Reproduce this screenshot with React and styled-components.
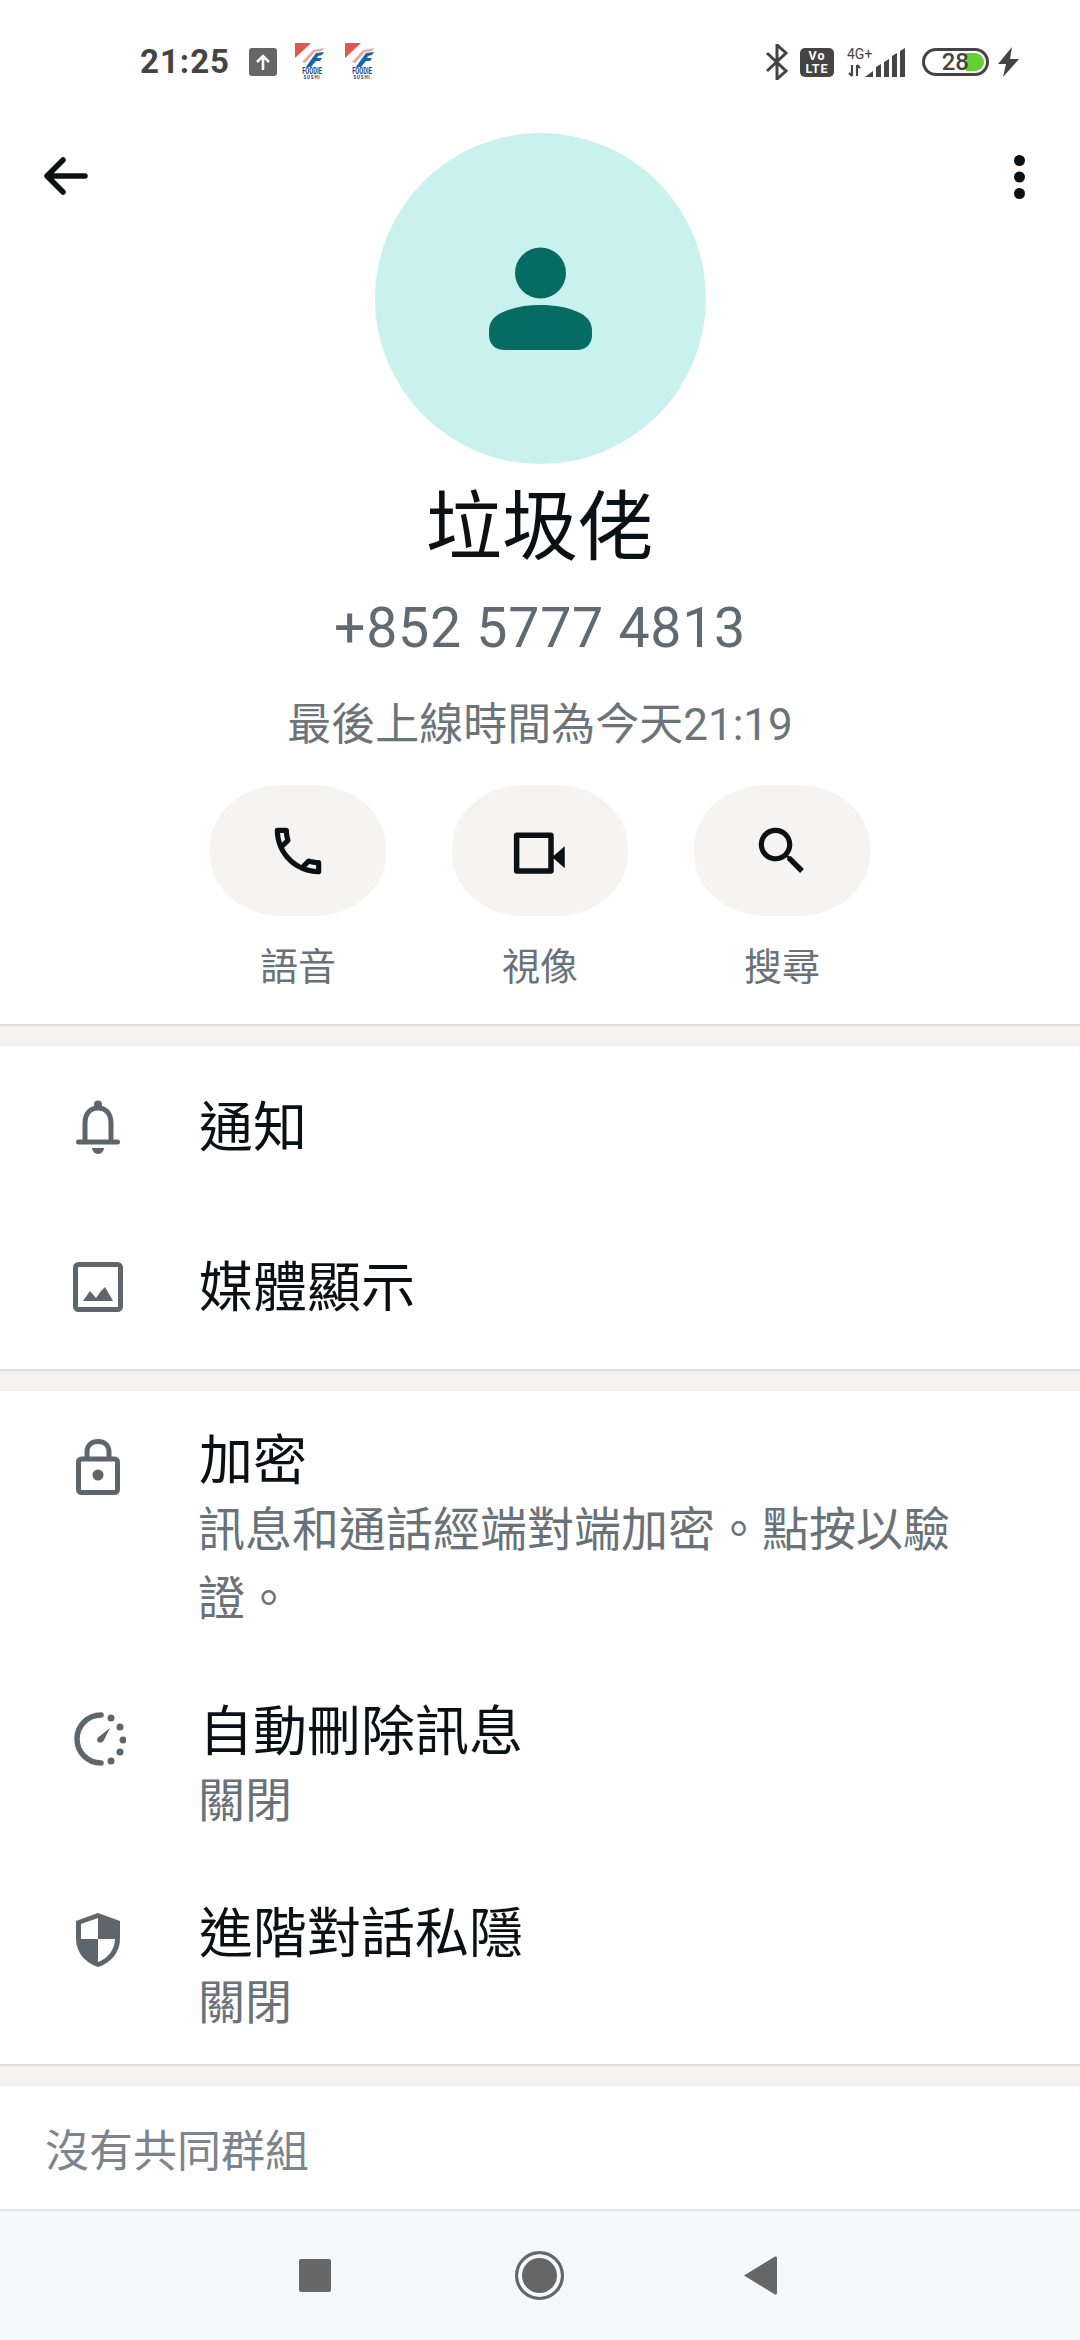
import React from 'react';
import styled, { createGlobalStyle } from 'styled-components';

const Global = createGlobalStyle`
  html, body { margin: 0; padding: 0; background: #fff; }
  * { box-sizing: border-box; }
  body { font-family: Roboto, "Noto Sans CJK TC", sans-serif; }
`;
const Page = styled.div`
  width: 1080px; height: 2340px; display: flex; flex-direction: column; background: #fff; overflow: hidden;
`;
const StatusBar = styled.div`
  height: 122px; flex: none; display: flex; justify-content: space-between; align-items: flex-start;
  padding: 42px 61px 0 140px; color: #444;
`;
const StatusGroup = styled.div`display: flex; align-items: center; height: 40px;`;
const Spacer = styled.span`flex: none; width: ${p => p.$w}px;`;
const Time = styled.span`font: 700 33px/40px Roboto, sans-serif; letter-spacing: 1px; color: #444; width: 109px;`;
const UploadBadge = styled.div`
  width: 28px; height: 28px; border-radius: 3px; background: #666; display: flex; align-items: center; justify-content: center;
`;
const VoLte = styled.div`
  width: 34px; height: 29px; border-radius: 5px; background: #444; color: #fff; display: flex; flex-direction: column;
  align-items: center; justify-content: center; font: 700 12.5px/13px Roboto, sans-serif; letter-spacing: 1px;
`;
const Battery = styled.div`
  position: relative; width: 67px; height: 28px; border: 3px solid #444; border-radius: 14px; overflow: hidden;
  display: flex; align-items: center; justify-content: flex-end; padding-right: 17px;
  font: 500 24px/22px Roboto, sans-serif; color: #444;
`;
const BatteryFill = styled.span`
  position: absolute; right: 2px; top: 2px; bottom: 2px; width: 18px; background: #63cf33; border-radius: 0 10px 10px 0;
`;
const BatteryText = styled.span`position: relative;`;

const Hero = styled.header`
  flex: none; display: flex; flex-direction: column; align-items: center; padding: 11px 0 35px;
`;
const TopRow = styled.div`
  width: 100%; display: grid; grid-template-columns: 1fr 331px 1fr; align-items: start;
`;
const Back = styled.div`padding: 21px 0 0 42px;`;
const More = styled.div`display: flex; justify-content: flex-end; padding: 22px 55px 0 0;`;
const Avatar = styled.div`
  width: 331px; height: 331px; border-radius: 50%; background: #c9f1ee; display: flex; align-items: center; justify-content: center;
`;
const Name = styled.h1`
  margin: 7px 0 0; font: 400 76px/100px "Noto Sans CJK TC", sans-serif; color: #0b1014;
`;
const Phone = styled.div`
  margin-top: 28px; font: 400 55.5px/60px Roboto, sans-serif; color: #5f6a72; letter-spacing: .7px;
`;
const Seen = styled.div`
  margin-top: 38px; font: 400 44px/56px Roboto, "Noto Sans CJK TC", sans-serif; color: #6b7479;
`;
const Actions = styled.div`display: flex; gap: 66px; margin-top: 32px;`;
const Action = styled.div`display: flex; flex-direction: column; align-items: center; gap: 23px;`;
const Pill = styled.div`
  width: 176px; height: 131px; border-radius: 72px / 62px; background: #f5f4f2; display: flex; align-items: center; justify-content: center;
`;
const ActionLabel = styled.div`font: 400 38px/50px "Noto Sans CJK TC", sans-serif; color: #697278;`;

const Gap = styled.div`
  flex: none; height: 22px; background: #f4f3f1; box-shadow: inset 0 3px 2px -1px #dcdcdc;
`;
const Section = styled.section`
  flex: none; display: flex; flex-direction: column; gap: ${p => p.$gap || 0}px; padding: ${p => p.$pad || '0'};
`;
const SimpleRow = styled.div`height: 160px; display: flex; align-items: center;`;
const InfoRow = styled.div`display: flex; align-items: flex-start; padding: 32px 90px 31px 0;`;
const IconCol = styled.div`
  flex: none; width: 198px; display: flex; justify-content: center; padding-right: 3px;
  margin-top: ${p => p.$top || 0}px;
`;
const RowBody = styled.div`flex: 1; min-width: 0;`;
const SimpleBody = styled(RowBody)`padding-bottom: 6px;`;
const Title = styled.div`padding-left: 1px; font: 400 54px/68px "Noto Sans CJK TC", sans-serif; color: #0b1014;`;
const Sub = styled.div`font: 400 47px/69px "Noto Sans CJK TC", sans-serif; color: #697278;`;
const Footer = styled.div`
  flex: 1; display: flex; align-items: center; padding: 0 0 0 45px; font: 400 44px/60px "Noto Sans CJK TC", sans-serif; color: #7b858b;
`;
const NavBar = styled.nav`
  flex: none; height: 131px; background: #f6f7f9; border-top: 2px solid #e2e3e5;
  display: grid; grid-template-columns: 1fr 1fr 1fr; align-items: center; justify-items: center; padding: 0 203px 0 203px;
`;
const NavSquare = styled.div`width: 32px; height: 33px; border-radius: 2px; background: #666;`;
const NavCircle = styled.div`
  width: 49px; height: 49px; border-radius: 50%; background: #666; border: 3px solid #666; box-shadow: inset 0 0 0 4px #f6f7f9;
`;
const NavBack = styled.svg`margin-right: 8px;`;

const Foodie = () => (
  <svg width="32" height="38" viewBox="0 0 32 38">
    <path d="M1 0h16L1 15z" fill="#e2574c" />
    <path d="M8 19 L19 7 L30 5 L28 8 L21 9 L11 20z" fill="#e8a9a0" />
    <path d="M14 21 L22 10 L30 9 L28 12 L24 13 L23 15 L28 15 L26 18 L22 18 L17 24 L12 24z" fill="#1d62ad" />
    <text transform="translate(18 31) scale(.72 1.1)" textAnchor="middle" fontFamily="Roboto, sans-serif" fontWeight="700" fontSize="8" fill="#27406b">FOODIE</text>
    <text x="18" y="36" textAnchor="middle" fontFamily="Roboto, sans-serif" fontWeight="700" fontSize="4.5" fill="#27406b" letterSpacing=".8">SUSHI</text>
  </svg>
);
const Gr = '#5f666b';

export default function App() {
  return (
    <Page>
      <Global />
      <StatusBar>
        <StatusGroup>
          <Time>21:25</Time>
          <UploadBadge>
            <svg width="18" height="18" viewBox="0 0 18 18" fill="none" stroke="#fff" strokeWidth="2.6"><path d="M9 17V3M3 9l6-6 6 6" /></svg>
          </UploadBadge>
          <Spacer $w={17} />
          <Foodie />
          <Spacer $w={18} />
          <Foodie />
        </StatusGroup>
        <StatusGroup>
          <svg width="23" height="36" viewBox="0 0 23 36" fill="none" stroke="#444" strokeWidth="3">
            <path d="M2 9l19 18-9 8V1l9 8L2 27" />
          </svg>
          <Spacer $w={12} />
          <VoLte><span>Vo</span><span>LTE</span></VoLte>
          <Spacer $w={13} />
          <svg width="58" height="34" viewBox="0 -2 58 34">
            <text x="0" y="12" fontFamily="Roboto, sans-serif" fontSize="14" fill="#444">4G+</text>
            <path d="M5 29V18M2 26l3 3M10 18v11M10 18l3 3" stroke="#444" strokeWidth="2.2" fill="none" />
            <path d="M18 30L26 24V30zM29 30V20L34 17V30zM37 30V15L42 12V30zM45 30V9L50 6V30zM53 30V4L58 1V30z" fill="#444" />
          </svg>
          <Spacer $w={17} />
          <Battery><BatteryFill /><BatteryText>28</BatteryText></Battery>
          <Spacer $w={9} />
          <svg width="21" height="30" viewBox="0 0 21 30"><path d="M14 0L0 17h8L5 30 21 12h-9z" fill="#444" /></svg>
        </StatusGroup>
      </StatusBar>

      <Hero>
        <TopRow>
          <Back>
            <svg width="46" height="44" viewBox="0 0 46 44" fill="none" stroke="#0b1014" strokeWidth="5.500" strokeLinecap="round" strokeLinejoin="round">
              <path d="M43 22H6M21 6L5 22l16 16" />
            </svg>
          </Back>
          <Avatar>
            <svg width="103" height="103" viewBox="0 0 103 103" fill="#056b63">
              <circle cx="51.500" cy="26" r="25.500" />
              <path d="M16 103C6 103 0 97 0 88V84C0 76 4 70 12 66 24 60 38 58 51.500 58S79 60 91 66C99 70 103 76 103 84V88C103 97 97 103 87 103z" />
            </svg>
          </Avatar>
          <More>
            <svg width="11" height="44" viewBox="0 0 11 44" fill="#0b1014">
              <circle cx="5.500" cy="5.500" r="5.500" /><circle cx="5.500" cy="22" r="5.500" /><circle cx="5.500" cy="38.500" r="5.500" />
            </svg>
          </More>
        </TopRow>
        <Name>垃圾佬</Name>
        <Phone>+852 5777 4813</Phone>
        <Seen>最後上線時間為今天21:19</Seen>
        <Actions>
          <Action>
            <Pill>
              <svg width="62" height="62" viewBox="0 0 24 24" fill="#0b1014"><path d="M6.54 5c.06.89.21 1.76.45 2.59l-1.2 1.2c-.41-1.2-.67-2.47-.76-3.79h1.51m9.86 12.02c.85.24 1.72.39 2.6.45v1.49c-1.32-.09-2.59-.35-3.8-.75l1.2-1.19M7.5 3H4c-.55 0-1 .45-1 1 0 9.39 7.61 17 17 17 .55 0 1-.45 1-1v-3.49c0-.55-.45-1-1-1-1.24 0-2.45-.2-3.57-.57-.1-.04-.21-.05-.31-.05-.26 0-.51.1-.71.29l-2.2 2.2c-2.83-1.45-5.15-3.76-6.59-6.59l2.2-2.2c.28-.28.36-.67.25-1.02C8.7 6.45 8.5 5.25 8.5 4c0-.55-.45-1-1-1z" /></svg>
            </Pill>
            <ActionLabel>語音</ActionLabel>
          </Action>
          <Action>
            <Pill>
              <svg width="66" height="62" viewBox="0 0 24 22.5" fill="#0b1014"><path d="M15 6.500v11H4.500v-11H15m1-2H3.500c-.55 0-1 .45-1 1v13c0 .55.45 1 1 1H16c.55 0 1-.45 1-1v-4.500l4 3.500v-8l-4 3.500V5.500c0-.55-.45-1-1-1z" /></svg>
            </Pill>
            <ActionLabel>視像</ActionLabel>
          </Action>
          <Action>
            <Pill>
              <svg width="62" height="62" viewBox="0 0 24 24" fill="#0b1014"><path d="M15.5 14h-.79l-.28-.27C15.41 12.59 16 11.11 16 9.5 16 5.91 13.09 3 9.5 3S3 5.91 3 9.5 5.91 16 9.5 16c1.61 0 3.09-.59 4.23-1.57l.27.28v.79l5 4.99L20.49 19l-4.99-5zm-6 0C7.01 14 5 11.99 5 9.5S7.01 5 9.5 5 14 7.01 14 9.5 11.99 14 9.5 14z" /></svg>
            </Pill>
            <ActionLabel>搜尋</ActionLabel>
          </Action>
        </Actions>
      </Hero>

      <Gap />
      <Section $pad="1px 0 2px">
        <SimpleRow>
          <IconCol>
            <svg width="44" height="54" viewBox="0 0 44 54" fill="none" stroke={Gr} strokeWidth="5" strokeLinecap="round">
              <path d="M2.5 42h39M9 41V23C9 14 14 8 22 8s13 6 13 15v18" />
              <circle cx="22" cy="4.5" r="4" fill={Gr} stroke="none" />
              <path d="M16 48h12c0 3-3 6-6 6s-6-3-6-6z" fill={Gr} stroke="none" />
            </svg>
          </IconCol>
          <SimpleBody><Title>通知</Title></SimpleBody>
        </SimpleRow>
        <SimpleRow>
          <IconCol>
            <svg width="50" height="50" viewBox="0 0 50 50" fill="none">
              <rect x="2.5" y="2.5" width="45" height="45" rx="3" stroke={Gr} strokeWidth="5" />
              <path d="M10 39l7-10 6 7 5-7 4-4 8 14z" fill={Gr} />
            </svg>
          </IconCol>
          <SimpleBody><Title>媒體顯示</Title></SimpleBody>
        </SimpleRow>
      </Section>
      <Gap />
      <Section $gap={2}>
        <InfoRow>
          <IconCol $top={16}>
            <svg width="44" height="56" viewBox="0 0 44 56" fill="none" stroke={Gr} strokeWidth="5">
              <path d="M11 20v-7C11 6 16 2.5 22 2.5S33 6 33 13v7" />
              <rect x="2.5" y="20" width="39" height="33.5" rx="3" />
              <circle cx="22" cy="36" r="5.5" fill={Gr} stroke="none" />
            </svg>
          </IconCol>
          <RowBody>
            <Title>加密</Title>
            <Sub>訊息和通話經端對端加密。點按以驗證。</Sub>
          </RowBody>
        </InfoRow>
        <InfoRow>
          <IconCol $top={18}>
            <svg width="56" height="54" viewBox="0 0 56 54" fill="none" stroke={Gr} strokeLinecap="round">
              <path d="M31 3A24 24 0 1 0 31 51" strokeWidth="5.500" />
              <path d="M40 16L33.500 29Q31 32 28 30Q26 28 28 25.500z" fill={Gr} stroke="none" />
              <g fill={Gr} stroke="none">
                <circle cx="41" cy="6" r="3.500" /><circle cx="50" cy="15" r="3.500" /><circle cx="53" cy="28" r="3.500" /><circle cx="50" cy="40" r="3.500" /><circle cx="41" cy="49" r="3.500" />
              </g>
            </svg>
          </IconCol>
          <RowBody>
            <Title>自動刪除訊息</Title>
            <Sub>關閉</Sub>
          </RowBody>
        </InfoRow>
        <InfoRow>
          <IconCol $top={17}>
            <svg width="44" height="54" viewBox="0 0 44 54">
              <path d="M22 0L44 8v18c0 13-9 24-22 28C9 50 0 39 0 26V8z" fill={Gr} />
              <path d="M22 5L5 11v15h17zM22 26v23c9-3 17-12 17-23z" fill="#fff" />
            </svg>
          </IconCol>
          <RowBody>
            <Title>進階對話私隱</Title>
            <Sub>關閉</Sub>
          </RowBody>
        </InfoRow>
      </Section>
      <Gap />
      <Footer>沒有共同群組</Footer>
      <NavBar>
        <NavSquare />
        <NavCircle />
        <NavBack width="33" height="39" viewBox="0 0 33 39"><path d="M0 19.500L31 0.500Q33 0 33 2V37Q33 39 31 38.500z" fill="#666" /></NavBack>
      </NavBar>
    </Page>
  );
}
